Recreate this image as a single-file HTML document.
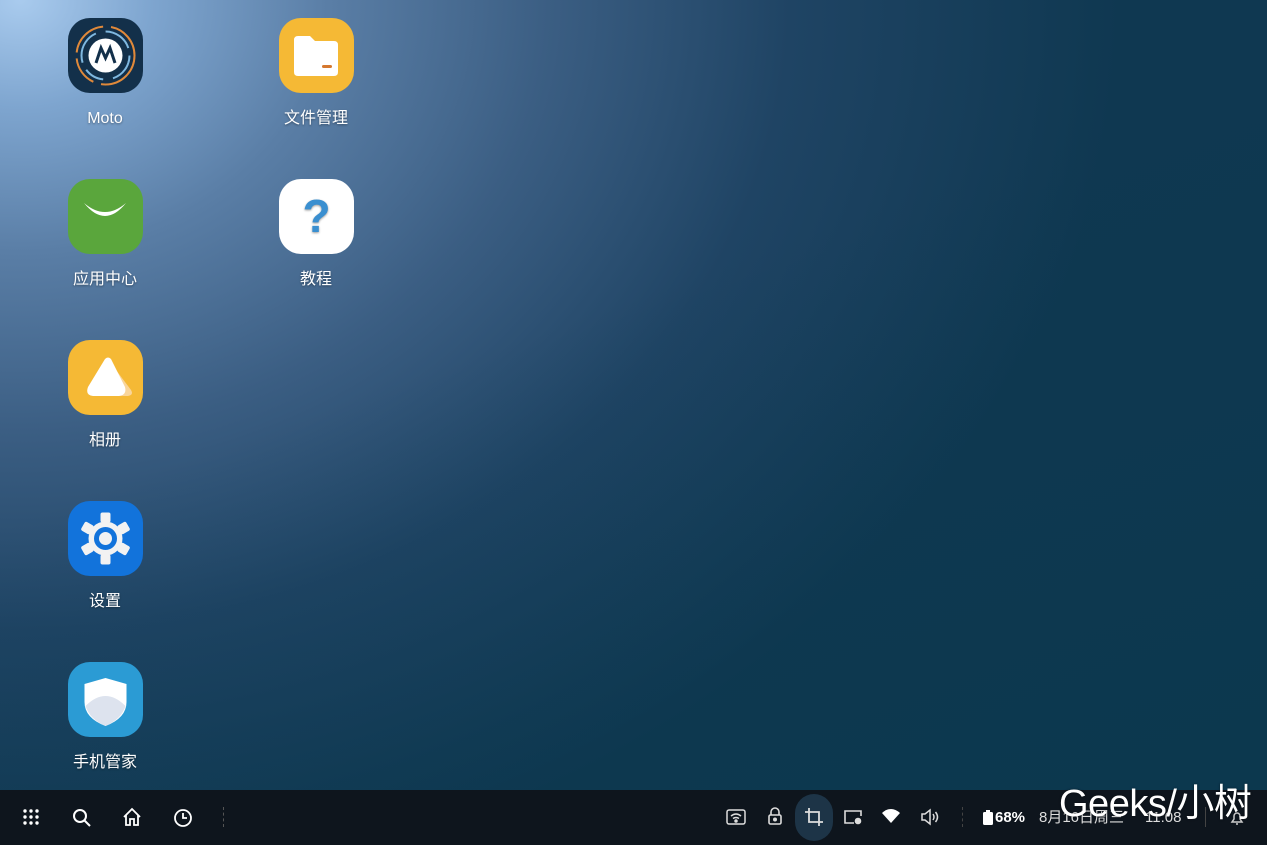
<!DOCTYPE html>
<html><head><meta charset="utf-8"><style>
*{margin:0;padding:0;box-sizing:border-box}
body{width:1267px;height:845px;overflow:hidden;position:relative;font-family:"Liberation Sans","Noto Sans CJK SC",sans-serif;
background:radial-gradient(ellipse 1100px 900px at 20px 0px,#a9cbee 0%,#7ea5cf 12%,#5a7ea6 28%,#3b5e83 48%,#1f4464 70%,#0f3851 100%);}
.bg2{position:absolute;inset:0;background:linear-gradient(160deg,rgba(0,0,0,0) 40%,rgba(8,55,75,0.5) 100%)}
.app{position:absolute;width:150px;text-align:center;color:#fff;font-size:16px;line-height:20px;height:110px;text-shadow:0 1px 2px rgba(0,0,0,.4)}
.ic{width:75px;height:75px;border-radius:22px;margin:0 auto 16px;position:relative;overflow:hidden}
.ic svg{position:absolute;left:0;top:0}
.bar{position:absolute;left:0;top:790px;width:1267px;height:55px;background:#0e151d}
.t{position:absolute;color:#fff;font-size:15px;top:809px;line-height:18px}
</style></head><body><div class="bg2"></div>

<div class="app" style="left:30px;top:18px"><div class="ic" style="background:#13304a"><svg width="75" height="75" viewBox="0 0 75 75">
<circle cx="37.5" cy="37.5" r="29" fill="none" stroke="#e0893a" stroke-width="2" stroke-dasharray="50 8 30 6 40 8"/>
<circle cx="37.5" cy="37.5" r="24" fill="none" stroke="#7fb8e0" stroke-width="2" stroke-dasharray="30 10 20 8 35 10"/>
<circle cx="37.5" cy="37.5" r="17" fill="#fff"/>
<path d="M28 45 L33 30 L37.5 40 L42 30 L47 45" fill="none" stroke="#13304a" stroke-width="3"/></svg></div>Moto</div>

<div class="app" style="left:241px;top:18px"><div class="ic" style="background:#f5b935"><svg width="75" height="75" viewBox="0 0 75 75">
<path d="M15 22 q0-4 4-4 h12 l5 5 h19 q4 0 4 4 v27 q0 4-4 4 h-36 q-4 0-4-4z" fill="#fff"/><rect x="43" y="47" width="10" height="3" rx="1.5" fill="#d5782f"/></svg></div>文件管理</div>

<div class="app" style="left:30px;top:179px"><div class="ic" style="background:#5aa63c"><svg width="75" height="75" viewBox="0 0 75 75"><path d="M16 24 q21 18 42 0 q-21 26 -42 0z" fill="#fff"/></svg></div>应用中心</div>

<div class="app" style="left:241px;top:179px"><div class="ic" style="background:#fff"><svg width="75" height="75" viewBox="0 0 75 75"><text x="37.5" y="53" text-anchor="middle" font-size="46" font-weight="bold" fill="#3a8fd0" font-family="Liberation Sans">?</text></svg></div>教程</div>

<div class="app" style="left:30px;top:340px"><div class="ic" style="background:#f5b935"><svg width="75" height="75" viewBox="0 0 75 75"><path d="M48 30 l15 20 q3 5-3 6 h-14z" fill="#f9d59a"/><path d="M37 19 q3-3 6 0 l14 28 q2 8-6 9 h-26 q-8-1-5-9z" fill="#fff"/></svg></div>相册</div>

<div class="app" style="left:30px;top:501px"><div class="ic" style="background:#1273db"><svg width="75" height="75" viewBox="0 0 75 75"><g fill="#f2f2f2" transform="translate(37.5 37.5)">
<circle r="17"/><rect x="-5" y="-26" width="10" height="10" rx="2"/>
<rect x="-5" y="-26" width="10" height="10" rx="2" transform="rotate(60)"/><rect x="-5" y="-26" width="10" height="10" rx="2" transform="rotate(120)"/><rect x="-5" y="-26" width="10" height="10" rx="2" transform="rotate(180)"/><rect x="-5" y="-26" width="10" height="10" rx="2" transform="rotate(240)"/><rect x="-5" y="-26" width="10" height="10" rx="2" transform="rotate(300)"/></g>
<circle cx="37.5" cy="37.5" r="9" fill="none" stroke="#1273db" stroke-width="5"/></svg></div>设置</div>

<div class="app" style="left:30px;top:662px"><div class="ic" style="background:#2b9bd4"><svg width="75" height="75" viewBox="0 0 75 75"><path d="M37.5 16 l21 6 v18 q0 16-21 24 q-21-8-21-24 v-18z" fill="#fff"/><path d="M17.5 44 q10-10 20-10 q10 0 20 10 q-4 13-20 20 q-16-7-20-20z" fill="#dde3ee"/></svg></div>手机管家</div>

<div class="bar"></div>
<svg style="position:absolute;left:22px;top:808px" width="18" height="18"><g fill="#fff"><circle cx="3" cy="3" r="1.7"/><circle cx="9" cy="3" r="1.7"/><circle cx="15" cy="3" r="1.7"/><circle cx="3" cy="9" r="1.7"/><circle cx="9" cy="9" r="1.7"/><circle cx="15" cy="9" r="1.7"/><circle cx="3" cy="15" r="1.7"/><circle cx="9" cy="15" r="1.7"/><circle cx="15" cy="15" r="1.7"/></g></svg>
<svg style="position:absolute;left:72px;top:808px" width="20" height="20" fill="none" stroke="#fff" stroke-width="2"><circle cx="8" cy="8" r="6"/><path d="M12.5 12.5 L18 18"/></svg>
<svg style="position:absolute;left:122px;top:807px" width="20" height="20" fill="none" stroke="#fff" stroke-width="1.8"><path d="M2 10 L10 2 L18 10 M4 8 V18 H8 V12 H12 V18 H16 V8"/></svg>
<svg style="position:absolute;left:173px;top:808px" width="20" height="20" fill="none" stroke="#fff" stroke-width="1.8"><circle cx="10" cy="10" r="8"/><path d="M10 5 V10 H14"/></svg>
<div style="position:absolute;left:223px;top:807px;height:20px;border-left:1px dashed #555"></div>

<div style="position:absolute;left:795px;top:794px;width:38px;height:47px;border-radius:19px;background:#1d3447"></div>
<svg style="position:absolute;left:726px;top:808px" width="20" height="18" fill="none" stroke="#ddd" stroke-width="1.5"><rect x="1" y="2" width="18" height="14" rx="2"/><path d="M5 8 q5-4 10 0 M7 10.5 q3-2 6 0"/><circle cx="10" cy="13" r="1" fill="#ddd"/></svg>
<svg style="position:absolute;left:767px;top:806px" width="16" height="20" fill="none" stroke="#ddd" stroke-width="1.6"><path d="M4 9 V6 a4 4 0 0 1 8 0 V9"/><rect x="2" y="9" width="12" height="9" rx="1.5"/><circle cx="8" cy="13.5" r="1.2" fill="#ddd"/></svg>
<svg style="position:absolute;left:804px;top:807px" width="20" height="20" fill="none" stroke="#ddd" stroke-width="1.8"><path d="M5 1 V15 H19 M1 5 H15 V19"/></svg>
<svg style="position:absolute;left:843px;top:808px" width="20" height="18" fill="none" stroke="#ddd" stroke-width="1.6"><path d="M11 15 H2 V3 H18 V8"/><circle cx="15" cy="13" r="2.5" fill="#ddd"/></svg>
<svg style="position:absolute;left:881px;top:808px" width="20" height="16"><path d="M1 5 q9-8 18 0 L10 15z" fill="#fff"/></svg>
<svg style="position:absolute;left:920px;top:808px" width="20" height="18" fill="none" stroke="#ddd" stroke-width="1.5"><path d="M2 6 H5 L10 2 V16 L5 12 H2z M13 6 q2 3 0 6 M15.5 4 q4 5 0 10"/></svg>
<div style="position:absolute;left:962px;top:807px;height:20px;border-left:1px dashed #444"></div>
<svg style="position:absolute;left:983px;top:810px" width="10" height="15"><rect x="3" y="0" width="4" height="2" fill="#fff"/><rect x="0" y="2" width="10" height="13" rx="1.5" fill="#fff"/></svg>
<div class="t" style="left:995px;font-weight:bold">68%</div>
<div class="t" style="left:1039px;color:#ddd">8月16日周三</div>
<div class="t" style="left:1145px;color:#ddd">11:08</div>
<div style="position:absolute;left:1205px;top:807px;height:20px;border-left:1px solid #444"></div>
<svg style="position:absolute;left:1230px;top:810px" width="14" height="16" fill="none" stroke="#ccc" stroke-width="1.5"><path d="M2 12 H12 L10 9 V6 a3 3 0 0 0-6 0 V9z M6 14 H8"/></svg>
<div style="position:absolute;left:1059px;top:782px;color:#fff;font-size:38px;line-height:44px;letter-spacing:-0.5px;text-shadow:0 0 2px rgba(0,0,0,.5)">Geeks/小树</div>
</body></html>
